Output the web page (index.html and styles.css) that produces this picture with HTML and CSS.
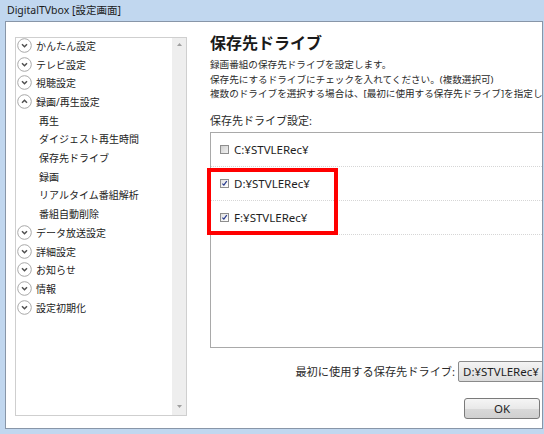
FILE: index.html
```html
<!DOCTYPE html>
<html lang="ja">
<head>
<meta charset="utf-8">
<title>DigitalTVbox [設定画面]</title>
<link rel="stylesheet" href="styles.css">
</head>
<body>
<div class="window">
  <div class="titlebar">DigitalTVbox [設定画面]</div>
  <div class="client">
    <div class="tree">
      <ul class="tree-list">
        <li class="item"><svg class="toggle" viewBox="0 0 15 15"><circle cx="7.5" cy="7.5" r="6.8"/><path d="M5 6.3 L7.5 8.8 L10 6.3"/></svg>かんたん設定</li>
        <li class="item"><svg class="toggle" viewBox="0 0 15 15"><circle cx="7.5" cy="7.5" r="6.8"/><path d="M5 6.3 L7.5 8.8 L10 6.3"/></svg>テレビ設定</li>
        <li class="item"><svg class="toggle" viewBox="0 0 15 15"><circle cx="7.5" cy="7.5" r="6.8"/><path d="M5 6.3 L7.5 8.8 L10 6.3"/></svg>視聴設定</li>
        <li class="item"><svg class="toggle" viewBox="0 0 15 15"><circle cx="7.5" cy="7.5" r="6.8"/><path d="M5 8.7 L7.5 6.2 L10 8.7"/></svg>録画/再生設定</li>
        <li class="item sub">再生</li>
        <li class="item sub">ダイジェスト再生時間</li>
        <li class="item sub">保存先ドライブ</li>
        <li class="item sub">録画</li>
        <li class="item sub">リアルタイム番組解析</li>
        <li class="item sub">番組自動削除</li>
        <li class="item"><svg class="toggle" viewBox="0 0 15 15"><circle cx="7.5" cy="7.5" r="6.8"/><path d="M5 6.3 L7.5 8.8 L10 6.3"/></svg>データ放送設定</li>
        <li class="item"><svg class="toggle" viewBox="0 0 15 15"><circle cx="7.5" cy="7.5" r="6.8"/><path d="M5 6.3 L7.5 8.8 L10 6.3"/></svg>詳細設定</li>
        <li class="item"><svg class="toggle" viewBox="0 0 15 15"><circle cx="7.5" cy="7.5" r="6.8"/><path d="M5 6.3 L7.5 8.8 L10 6.3"/></svg>お知らせ</li>
        <li class="item"><svg class="toggle" viewBox="0 0 15 15"><circle cx="7.5" cy="7.5" r="6.8"/><path d="M5 6.3 L7.5 8.8 L10 6.3"/></svg>情報</li>
        <li class="item"><svg class="toggle" viewBox="0 0 15 15"><circle cx="7.5" cy="7.5" r="6.8"/><path d="M5 6.3 L7.5 8.8 L10 6.3"/></svg>設定初期化</li>
      </ul>
      <div class="scrollbar">
        <svg class="arrow" viewBox="0 0 7 4"><path d="M0 4 L3.5 0 L7 4 Z"/></svg>
        <svg class="arrow" viewBox="0 0 7 4"><path d="M0 0 L3.5 4 L7 0 Z"/></svg>
      </div>
    </div>
    <div class="main">
      <h1 class="heading">保存先ドライブ</h1>
      <p class="desc">録画番組の保存先ドライブを設定します。<br>保存先にするドライブにチェックを入れてください。(複数選択可)<br>複数のドライブを選択する場合は、[最初に使用する保存先ドライブ]を指定し</p>
      <div class="label">保存先ドライブ設定:</div>
      <div class="drives">
        <div class="drive"><span class="check"></span>C:¥STVLERec¥</div>
        <div class="drive"><span class="check checked"><svg viewBox="0 0 9 9"><path d="M1.8 4.6 L3.7 6.6 L7.4 1.6"/></svg></span>D:¥STVLERec¥</div>
        <div class="drive"><span class="check checked"><svg viewBox="0 0 9 9"><path d="M1.8 4.6 L3.7 6.6 L7.4 1.6"/></svg></span>F:¥STVLERec¥</div>
        <div class="highlight"></div>
      </div>
      <div class="first-row">
        <span class="first-label">最初に使用する保存先ドライブ:</span>
        <div class="combo">D:¥STVLERec¥</div>
      </div>
      <div class="ok-row"><button class="ok">OK</button></div>
    </div>
  </div>
</div>
</body>
</html>
```
FILE: styles.css
```css
html, body {
  margin: 0;
  padding: 0;
}
body {
  width: 544px;
  height: 434px;
  overflow: hidden;
  font-family: "Noto Sans", "Noto Sans CJK JP", sans-serif;
  color: #1e1e1e;
}
.window {
  width: 544px;
  height: 434px;
  background: #c1d7ef;
  display: flex;
  flex-direction: column;
}
.titlebar {
  height: 21px;
  line-height: 21px;
  padding-left: 7px;
  font-size: 10.5px;
  color: #1a1a1a;
  box-sizing: border-box;
}
.client {
  margin-left: 5px;
  width: 536px;
  height: 406px;
  border: 1px solid #8896a8;
  background: #ffffff;
  display: flex;
  align-items: flex-start;
  overflow: hidden;
}
.tree {
  margin-top: 15px;
  margin-left: 9px;
  width: 170px;
  height: 377px;
  border: 1px solid #cfcfcf;
  display: flex;
  flex-shrink: 0;
  overflow: hidden;
}
.tree-list {
  list-style: none;
  margin: -2px 0 0 0;
  padding: 0;
  flex: 1;
}
.item {
  height: 18.71px;
  display: flex;
  align-items: center;
  font-size: 10px;
  color: #222;
  padding-left: 1px;
  white-space: nowrap;
}
.item.sub {
  padding-left: 23px;
}
.toggle {
  width: 15px;
  height: 15px;
  margin-right: 4px;
  flex-shrink: 0;
}
.toggle circle {
  fill: #fff;
  stroke: #a8a8a8;
  stroke-width: 1;
}
.toggle path {
  fill: none;
  stroke: #505050;
  stroke-width: 1.5;
}
.scrollbar {
  width: 14px;
  background: #eeeeee;
  display: flex;
  flex-direction: column;
  justify-content: space-between;
  align-items: center;
  padding: 5px 0 7px;
  box-sizing: border-box;
}
.arrow {
  width: 5px;
  height: 3px;
  fill: #a0a0a0;
}
.main {
  margin-left: 23px;
  width: 348px;
  flex-shrink: 0;
  padding-top: 11px;
}
.heading {
  margin: 0;
  font-size: 16px;
  line-height: 20px;
  font-weight: bold;
  color: #1a1a1a;
}
.desc {
  margin: 5px 0 0;
  font-size: 9.6px;
  line-height: 14.5px;
  color: #2a2a2a;
  white-space: nowrap;
}
.label {
  margin-top: 12px;
  font-size: 11px;
  line-height: 14px;
  color: #2a2a2a;
}
.drives {
  position: relative;
  margin-top: 4px;
  height: 214px;
  border: 1px solid #a9a9a9;
  border-right: none;
}
.drive {
  height: 33px;
  border-bottom: 1px dotted #d6d6d6;
  display: flex;
  align-items: center;
  padding-left: 9px;
  font-size: 11.5px;
  color: #1e1e1e;
}
.check {
  width: 7px;
  height: 7px;
  border: 1px solid #8e8e8e;
  background: linear-gradient(135deg, #cfcfcf, #f2f2f2);
  margin-right: 5px;
  display: flex;
}
.check.checked {
  background: linear-gradient(135deg, #e2e2e2, #ffffff);
}
.check svg {
  width: 7px;
  height: 7px;
}
.check path {
  fill: none;
  stroke: #283a8e;
  stroke-width: 1.6;
}
.highlight {
  position: absolute;
  left: -4px;
  top: 35px;
  width: 123px;
  height: 59px;
  border: 4px solid #ff0000;
}
.first-row {
  margin-top: 13px;
  height: 21px;
  display: flex;
  justify-content: flex-end;
  align-items: center;
}
.first-label {
  font-size: 11.2px;
  color: #2a2a2a;
  margin-right: 3px;
}
.combo {
  width: 94px;
  height: 19px;
  border: 1px solid #8a8a8a;
  border-radius: 2px;
  background: linear-gradient(#f4f4f4, #dcdcdc);
  font-size: 11.5px;
  line-height: 19px;
  padding-left: 4px;
  white-space: nowrap;
  overflow: hidden;
}
.ok-row {
  margin-top: 16px;
  display: flex;
  justify-content: flex-end;
  padding-right: 18px;
}
.ok {
  width: 76px;
  height: 21px;
  border: 1px solid #7a7a7a;
  border-radius: 3px;
  background: linear-gradient(#f5f5f5 0%, #e9e9e9 50%, #d9d9d9 51%, #d0d0d0 100%);
  font-family: "Noto Sans", sans-serif;
  font-size: 11.5px;
  color: #1e1e1e;
  padding: 0;
}
```
